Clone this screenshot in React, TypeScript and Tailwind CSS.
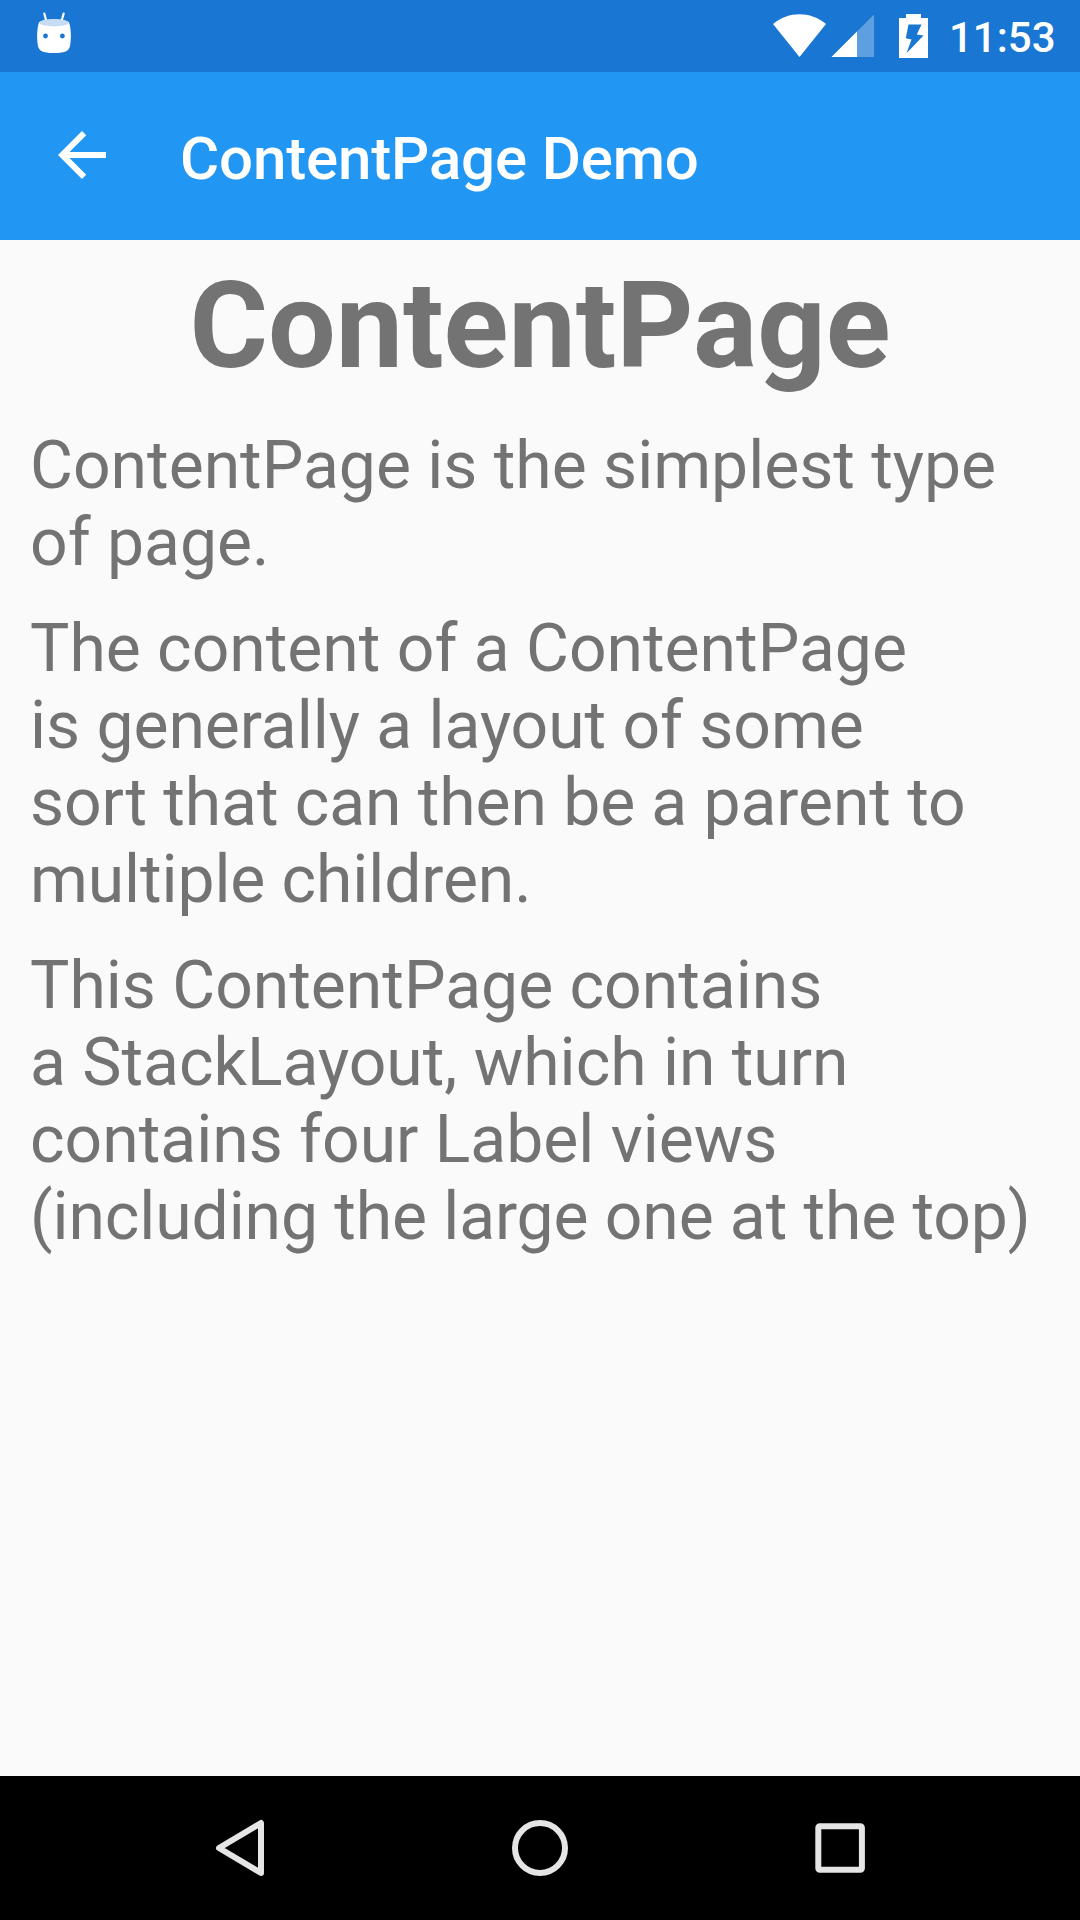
type Line = { text: string; tracking?: string };

const P = ({ lines }: { lines: Line[] }) => (
  <p className="mb-[29px] whitespace-nowrap text-[66px] leading-[77px]">
    {lines.map(({ text, tracking = "" }) => (
      <span key={text} className={`block ${tracking}`}>{text}</span>
    ))}
  </p>
);

export default function App() {
  return (
    <div className="flex h-[1920px] w-[1080px] flex-col overflow-hidden bg-[#fafafa] font-['Roboto',sans-serif] text-[#737373]">
      <header className="flex h-[72px] shrink-0 items-center justify-between bg-[#1976d2] text-white">
        <svg className="ml-[36px]" width="36" height="72" viewBox="36 0 36 72">
          <path d="M44.3 13.5l1.8 7M63.7 13.5l-2 7" stroke="#fff" strokeWidth="2.2" strokeLinecap="round" />
          <path d="M39 22.5C42 18 66 18 69 22.5C71 28 71.5 38 70 46C69 50.500 66 53 54 53C42 53 39 50.500 38 46C36.500 38 37 28 39 22.500z" fill="#fff" />
          <ellipse cx="54" cy="22.8" rx="14.5" ry="3.6" fill="#c6dcf4" />
          <circle cx="45.5" cy="36" r="2.4" fill="#1976d2" />
          <circle cx="62.4" cy="36" r="2.4" fill="#1976d2" />
        </svg>
        <div className="flex items-center">
          <svg width="180" height="72" viewBox="770 0 180 72" fill="#fff">
            <path d="M773 24C788.500 11 810.500 11 826 24L799.500 57z" />
            <path d="M874 14.500V57h-42.500z" opacity=".3" />
            <path d="M857 31.500V57h-25.500z" />
            <path d="M899 18h7v-4h15v4h7v40h-29z" />
            <path d="M908.500 24.600H921.500L916.800 34.500L923.500 35.500L906.500 53.300L911.500 39.500L905.800 38.200z" fill="#1976d2" />
          </svg>
          <span className="mr-[25px] w-[105px] whitespace-nowrap pt-[3px] text-[42px] font-medium leading-[49px] indent-[-1px]">11:53</span>
        </div>
      </header>
      <div className="flex h-[168px] shrink-0 items-center bg-[#2196f3] text-white">
        <svg className="-mt-[2px] ml-[58px]" width="48" height="48" viewBox="4 4 16 16" fill="#fff">
          <path d="M20 11H7.830l5.590-5.590L12 4l-8 8 8 8 1.410-1.410L7.830 13H20z" />
        </svg>
        <h1 className="ml-[74px] pt-[5px] text-[60px] font-medium leading-[71px] tracking-[-0.150px]">ContentPage Demo</h1>
      </div>
      <main className="flex-1 px-[30px] pt-4">
        <h2 className="mb-[31px] text-center text-[120px] font-bold leading-[140px]">ContentPage</h2>
        <P lines={[{ text: "ContentPage is the simplest type" }, { text: "of page." }]} />
        <P
          lines={[
            { text: "The content of a ContentPage" },
            { text: "is generally a layout of some", tracking: "tracking-[-0.030px]" },
            { text: "sort that can then be a parent to", tracking: "tracking-[-0.070px]" },
            { text: "multiple children.", tracking: "tracking-[-0.100px]" },
          ]}
        />
        <P
          lines={[
            { text: "This ContentPage contains" },
            { text: "a StackLayout, which in turn" },
            { text: "contains four Label views" },
            { text: "(including the large one at the top)", tracking: "tracking-[-0.090px]" },
          ]}
        />
      </main>
      <nav className="h-[144px] shrink-0 bg-black">
        <svg width="1080" height="144" fill="none" stroke="#e5e5e5" strokeWidth="6">
          <path d="M261 47v50l-42-25z" strokeLinejoin="round" />
          <circle cx="540" cy="72" r="25" />
          <rect x="818.300" y="50.200" width="43.600" height="43.600" rx="1.500" />
        </svg>
      </nav>
    </div>
  );
}
